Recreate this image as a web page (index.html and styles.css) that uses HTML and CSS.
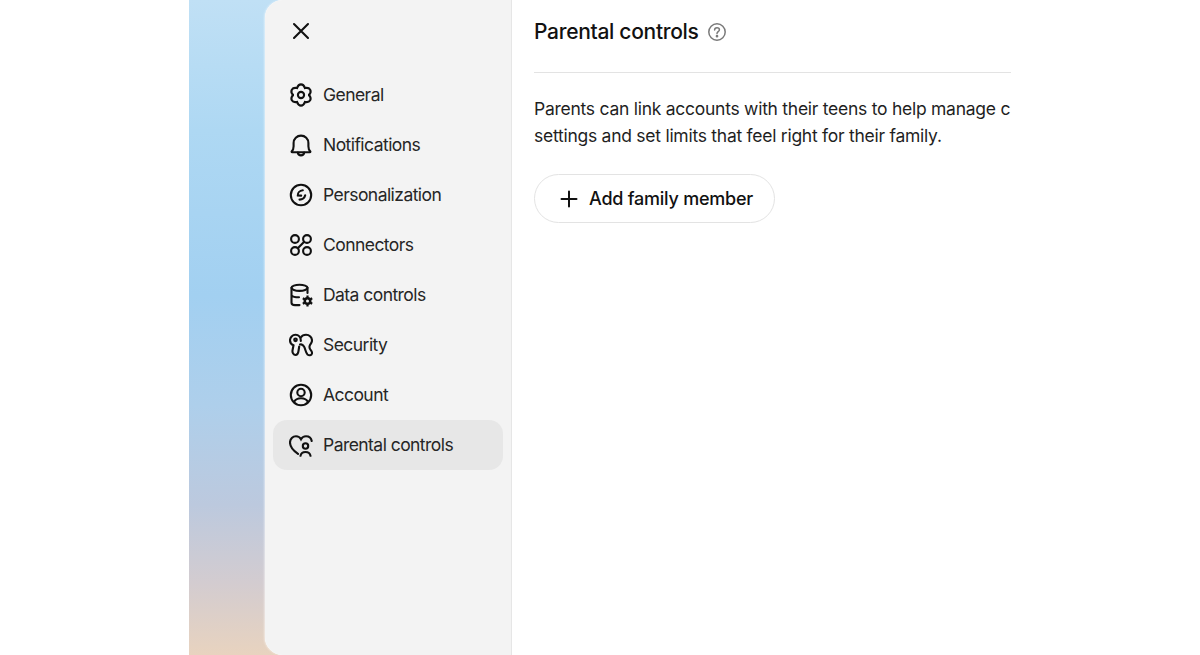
FILE: index.html
```html
<!DOCTYPE html>
<html lang="en">
<head>
    <meta charset="UTF-8">
    <meta name="viewport" content="width=device-width, initial-scale=1.0">
    <title>Parental controls</title>
    <link rel="stylesheet" href="styles.css">
</head>
<body>

<div class="wallpaper">
    <div class="dialog">
        <div class="sidebar">
            <button class="close-button" aria-label="Close">
                <svg class="icon" viewBox="0 0 24 24"><path d="M5 5l14 14M19 5L5 19"/></svg>
            </button>

            <div class="nav-item">
                <svg class="icon" viewBox="0 0 24 24">
                    <path d="M8 5.100C8.800 2.800 10 1.400 12 1.400s3.200 1.400 4 3.700"/>
                    <path d="M8 5.100C8.800 2.800 10 1.400 12 1.400s3.200 1.400 4 3.700" transform="rotate(60 12 12)"/>
                    <path d="M8 5.100C8.800 2.800 10 1.400 12 1.400s3.200 1.400 4 3.700" transform="rotate(120 12 12)"/>
                    <path d="M8 5.100C8.800 2.800 10 1.400 12 1.400s3.200 1.400 4 3.700" transform="rotate(180 12 12)"/>
                    <path d="M8 5.100C8.800 2.800 10 1.400 12 1.400s3.200 1.400 4 3.700" transform="rotate(240 12 12)"/>
                    <path d="M8 5.100C8.800 2.800 10 1.400 12 1.400s3.200 1.400 4 3.700" transform="rotate(300 12 12)"/>
                    <circle cx="12" cy="12" r="3.100"/>
                </svg>
                <span>General</span>
            </div>
            <div class="nav-item">
                <svg class="icon" viewBox="0 0 24 24">
                    <path d="M2.800 18.300c1.300-1.300 1.800-2.700 1.800-5V10a7.400 7.400 0 0 1 14.800 0v3.300c0 2.300.5 3.700 1.800 5 .4.400.2 1-.4 1H3.200c-.6 0-.8-.6-.4-1z"/>
                    <path d="M8.800 19.500c.3 1.900 1.600 2.900 3.200 2.900s2.900-1 3.200-2.900"/>
                </svg>
                <span>Notifications</span>
            </div>
            <div class="nav-item">
                <svg class="icon" viewBox="0 0 24 24">
                    <circle cx="12" cy="12" r="10.200"/>
                    <path d="M13.800 7.300C11 7.600 8.500 9.700 8.800 12.500l3.400.1"/>
                    <path d="M10.500 16.600c2.600 0 5-1.500 5.700-4.300"/>
                </svg>
                <span>Personalization</span>
            </div>
            <div class="nav-item">
                <svg class="icon" viewBox="0 0 24 24">
                    <circle cx="6" cy="6" r="3.900"/>
                    <circle cx="18" cy="6" r="3.900"/>
                    <circle cx="6" cy="18" r="3.900"/>
                    <circle cx="18" cy="18" r="3.900"/>
                    <path d="M15.200 8.800l-6.400 6.400"/>
                </svg>
                <span>Connectors</span>
            </div>
            <div class="nav-item">
                <svg class="icon" viewBox="0 0 24 24">
                    <ellipse cx="10.500" cy="4.800" rx="8" ry="3.100"/>
                    <path d="M2.500 4.800v15c0 1.600 1.500 2.300 3.500 2.300h4.500M2.500 12.300c1 1.300 3.500 2 7.500 2M18.500 4.800V10"/>
                    <circle class="solid" cx="18.500" cy="18" r="4"/>
                    <path class="gear-teeth" d="M18.500 12.600v10.800M13.800 15.300l9.400 5.400M13.800 20.700l9.400-5.400"/>
                    <circle class="hole" cx="18.500" cy="18" r="1.500"/>
                </svg>
                <span>Data controls</span>
            </div>
            <div class="nav-item">
                <svg class="icon" viewBox="0 0 24 24">
                    <path d="M11.800 8C12 4 9.500 1.800 6.500 1.800S1 4.300 1 7.300c0 2.200 1.500 4.200 3.500 5l-1 5.200C3.200 19.500 4.500 22 6.500 22s2.800-2.200 3-4l.7-4.500"/>
                    <path d="M11.800 4.500C13 2.700 15 1.800 17 1.800c3.500 0 6 2.700 6 5.700 0 2-1.200 3.300-2 4.500-.6 1-.7 2.200-.2 3.500.7 2 2.700 3 2.200 5-.5 2-3 2.300-4.500 1-2-2-2-5.500-3.500-8-1-1.700-2.500-2.500-4-2"/>
                    <circle cx="6.500" cy="6.800" r="1.300"/>
                </svg>
                <span>Security</span>
            </div>
            <div class="nav-item">
                <svg class="icon" viewBox="0 0 24 24">
                    <circle cx="12" cy="12" r="10.200"/>
                    <circle cx="12" cy="9.500" r="3.700"/>
                    <path d="M5 19.200c1.200-2.700 3.700-3.900 7-3.900s5.800 1.200 7 3.900"/>
                </svg>
                <span>Account</span>
            </div>
            <div class="nav-item active">
                <svg class="icon" viewBox="0 0 24 24">
                    <path d="M9 20.800C4.500 17.800 1 14 1 9.500 1 6 3.800 3.300 7 3.300c2.200 0 4 1.100 5 3 1-1.900 2.800-3 5-3 3 0 5.300 2 5.700 4.700"/>
                    <circle cx="16.500" cy="13" r="2.700"/>
                    <path d="M11.500 22.800c.4-2.500 2.400-3.800 5-3.800s4.600 1.300 5 3.800"/>
                </svg>
                <span>Parental controls</span>
            </div>
        </div>

        <div class="content">
            <div class="content-header">
                <h2>Parental controls</h2>
                <svg class="help-icon" viewBox="0 0 20 20">
                    <circle cx="10" cy="10" r="8.200"/>
                    <path d="M7.600 8c0-1.500 1-2.300 2.400-2.300s2.400.8 2.400 2.100c0 1.900-2.400 1.900-2.400 3.700"/>
                    <circle class="dot" cx="10" cy="14.200" r=".6"/>
                </svg>
            </div>
            <p class="intro">Parents can link accounts with their teens to help manage c</p>
            <p class="intro intro-last">settings and set limits that feel right for their family.</p>
            <button class="add-button">
                <svg class="plus-icon" viewBox="0 0 18 18"><path d="M9 1.500v15M1.500 9h15"/></svg>
                Add family member
            </button>
        </div>
    </div>
</div>

</body>
</html>
```

FILE: styles.css
```css
body {
    margin: 0;
    height: 655px;
    overflow: hidden;
    background-color: white;
    font-family: Inter, "Liberation Sans", sans-serif;
    color: #1a1a1a;
}

.wallpaper {
    height: 655px;
    margin-left: 189px;
    padding-left: 76px;
    background: linear-gradient(180deg, #c0e0f5 0%, #aed8f3 20%, #a2d0f1 45%, #aecfeb 62%, #bcc9de 77%, #d3ccd0 89%, #e8d3bf 100%) no-repeat;
    background-size: 120px 100%;
}

.dialog {
    display: flex;
    width: 935px;
    height: 655px;
    background-color: white;
    border-radius: 18px;
    overflow: hidden;
    box-shadow: -1px 0 2px rgba(255, 255, 255, 0.5);
}

.sidebar {
    box-sizing: border-box;
    width: 247px;
    flex-shrink: 0;
    padding: 7px 8px 0;
    background-color: #f3f3f3;
    border-right: 1px solid #e6e6e6;
}

.icon {
    width: 24px;
    height: 24px;
    flex-shrink: 0;
    fill: none;
    stroke: #111111;
    stroke-width: 2.100;
    stroke-linecap: round;
}

.icon .solid {
    fill: #111111;
    stroke: none;
}

.icon .gear-teeth {
    stroke-width: 2.200;
    stroke-linecap: butt;
}

.icon .hole {
    fill: #f3f3f3;
    stroke: none;
}

.close-button {
    display: flex;
    align-items: center;
    justify-content: center;
    width: 48px;
    height: 48px;
    margin-left: 4px;
    margin-bottom: 15px;
    padding: 0;
    background: none;
    border: none;
}

.nav-item {
    display: flex;
    align-items: center;
    gap: 10px;
    height: 50px;
    padding-left: 16px;
    border-radius: 14px;
    font-size: 17.500px;
    letter-spacing: -0.55px;
    color: #262626;
}

.nav-item span {
    padding-bottom: 2px;
}

.nav-item.active {
    background-color: #e7e7e7;
}

.content {
    width: 477px;
    margin-left: 22px;
    overflow: hidden;
}

.content-header {
    display: flex;
    align-items: center;
    gap: 8px;
    height: 63px;
    padding-bottom: 9px;
    border-bottom: 1px solid #e3e3e3;
    margin-bottom: 22px;
}

h2 {
    margin: 0;
    font-size: 21px;
    font-weight: 500;
    letter-spacing: -0.3px;
    color: #111111;
}

.help-icon {
    width: 20px;
    height: 20px;
    fill: none;
    stroke: #7a7a7a;
    stroke-width: 1.500;
    stroke-linecap: round;
}

.help-icon .dot {
    fill: #7a7a7a;
}

.intro {
    margin: 0;
    font-size: 17.500px;
    line-height: 27px;
    letter-spacing: -0.26px;
    white-space: nowrap;
    color: #1f1f1f;
}

.intro-last {
    margin-bottom: 25px;
}

.add-button {
    display: flex;
    align-items: center;
    gap: 11px;
    box-sizing: border-box;
    width: 241px;
    height: 49px;
    padding: 0 0 0 25px;
    background-color: white;
    border: 1px solid #e3e3e3;
    border-radius: 25px;
    font-family: inherit;
    font-size: 18px;
    font-weight: 500;
    letter-spacing: -0.23px;
    color: #111111;
}

.plus-icon {
    width: 18px;
    height: 18px;
    flex-shrink: 0;
    fill: none;
    stroke: #111111;
    stroke-width: 2;
    stroke-linecap: round;
}
```
